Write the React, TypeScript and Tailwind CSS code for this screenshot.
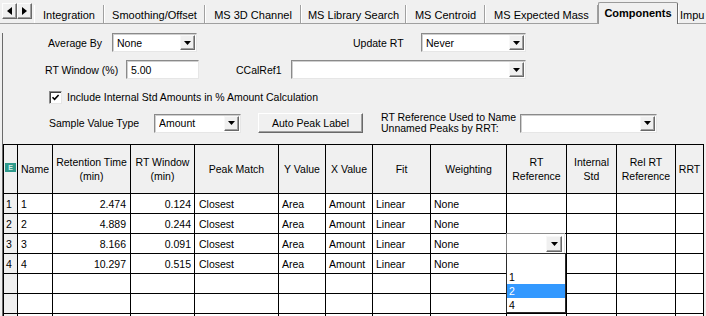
import React from "react";

function DownArrow() {
  return (
    <svg width="7" height="4" viewBox="0 0 7 4">
      <path d="M0 0h7L3.5 4z" fill="#000" />
    </svg>
  );
}

function DropBtn({ className = "" }: { className?: string }) {
  return (
    <div
      className={`flex items-center justify-center bg-[#f0f0f0] border border-t-[#f8f8f8] border-l-[#f8f8f8] border-r-[#696969] border-b-[#696969] shadow-[inset_-1px_-1px_0_#a0a0a0] ${className}`}
    >
      <DownArrow />
    </div>
  );
}

function Combo({ className = "", value = "" }: { className?: string; value?: string }) {
  return (
    <div
      className={`flex items-center bg-white border border-t-[#8a8a8a] border-l-[#8a8a8a] border-r-[#e6e6e6] border-b-[#e6e6e6] shadow-[inset_1px_1px_0_#cfcfcf] pl-[4px] pr-[1px] ${className}`}
    >
      <span className="flex-1 truncate">{value}</span>
      <DropBtn className="w-[15px] h-[15px]" />
    </div>
  );
}

function ArrowBtn({ dir }: { dir: "l" | "r" }) {
  return (
    <div className="w-[15px] h-[16px] flex items-center justify-center bg-[#f0f0f0] border border-t-[#fdfdfd] border-l-[#fdfdfd] border-r-[#696969] border-b-[#696969] shadow-[inset_-1px_-1px_0_#a0a0a0]">
      <svg width="5" height="8" viewBox="0 0 5 8">
        {dir === "l" ? <path d="M5 0v8L0 4z" fill="#000" /> : <path d="M0 0v8l5-4z" fill="#000" />}
      </svg>
    </div>
  );
}

const tabs: { label: string; w: string; sel?: boolean; left?: boolean }[] = [
  { label: "Integration", w: "w-[70px]" },
  { label: "Smoothing/Offset", w: "w-[101px]" },
  { label: "MS 3D Channel", w: "w-[96px]" },
  { label: "MS Library Search", w: "w-[105px]" },
  { label: "MS Centroid", w: "w-[79px]" },
  { label: "MS Expected Mass", w: "w-[113px]" },
  { label: "Components", w: "w-[80px]", sel: true },
  { label: "Impu", w: "w-[60px]", left: true },
];

const cols =
  "grid grid-cols-[14px_35px_78px_64px_84px_47px_47px_58px_76px_60px_50px_59px_28px]";

const headers: { t: React.ReactNode }[] = [
  { t: "Name" },
  { t: <>Retention Time<br />(min)</> },
  { t: <>RT Window<br />(min)</> },
  { t: "Peak Match" },
  { t: "Y Value" },
  { t: "X Value" },
  { t: "Fit" },
  { t: "Weighting" },
  { t: <>RT<br />Reference</> },
  { t: <>Internal<br />Std</> },
  { t: <>Rel RT<br />Reference</> },
  { t: "RRT" },
];

const rows = [
  ["1", "1", "2.474", "0.124", "Closest", "Area", "Amount", "Linear", "None"],
  ["2", "2", "4.889", "0.244", "Closest", "Area", "Amount", "Linear", "None"],
  ["3", "3", "8.166", "0.091", "Closest", "Area", "Amount", "Linear", "None"],
  ["4", "4", "10.297", "0.515", "Closest", "Area", "Amount", "Linear", "None"],
  ["", "", "", "", "", "", "", "", ""],
  ["", "", "", "", "", "", "", "", ""],
  ["", "", "", "", "", "", "", "", ""],
];

export default function App() {
  return (
    <div className="w-[706px] h-[316px] overflow-hidden bg-[#f0f0f0] text-black font-['Liberation_Sans',Arial,sans-serif] text-[10.5px] leading-[12px]">
      {/* Tab strip */}
      <div className="flex items-end h-[24px] border-b border-[#a0a0a0] text-[11px] whitespace-nowrap">
        <div className="self-start mt-[3px] ml-[2px] flex">
          <ArrowBtn dir="l" />
          <ArrowBtn dir="r" />
        </div>
        <div className="flex items-end ml-[2px]">
          {tabs.map((t) =>
            t.sel ? (
              <div
                key={t.label}
                className={`${t.w} h-[22px] -mb-px relative z-10 flex items-center justify-center bg-[#f0f0f0] border-t border-l border-[#9a9a9a] border-r border-r-[#6a6a6a] rounded-t-[2px] font-bold pb-[1px] shrink-0`}
              >
                {t.label}
              </div>
            ) : (
              <div
                key={t.label}
                className={`${t.w} h-[18px] flex items-center ${t.left ? "justify-start pl-[1px]" : "justify-center"} border-l border-l-white border-r border-r-[#a0a0a0] pt-[1px] overflow-hidden shrink-0`}
              >
                {t.label}
              </div>
            )
          )}
        </div>
      </div>

      {/* Body */}
      <div className="ml-[2px] border-l border-[#6a6a6a] h-[292px]">
        {/* Row 1 */}
        <div className="flex items-center mt-[9px] h-[19px] pl-[45px]">
          <div className="w-[64px]">Average By</div>
          <Combo className="w-[85px] h-[19px]" value="None" />
          <div className="ml-[156px] w-[68px]">Update RT</div>
          <Combo className="w-[105px] h-[19px]" value="Never" />
        </div>
        {/* Row 2 */}
        <div className="flex items-center mt-[8px] h-[19px] pl-[42px]">
          <div className="w-[81px]">RT Window (%)</div>
          <div className="w-[73px] h-[19px] flex items-center bg-white border border-t-[#8a8a8a] border-l-[#8a8a8a] border-r-[#e6e6e6] border-b-[#e6e6e6] shadow-[inset_1px_1px_0_#cfcfcf] pl-[4px]">
            5.00
          </div>
          <div className="ml-[37px] w-[55px]">CCalRef1</div>
          <Combo className="w-[235px] h-[19px]" value="" />
        </div>
        {/* Row 3 */}
        <div className="flex items-center mt-[11px] h-[14px] pl-[46px]">
          <div className="w-[13px] h-[13px] bg-white border border-t-[#8a8a8a] border-l-[#8a8a8a] border-r-[#e6e6e6] border-b-[#e6e6e6] shadow-[inset_1px_1px_0_#404040] flex items-center justify-center">
            <svg width="9" height="9" viewBox="0 0 9 9">
              <path d="M1.5 4.2 L3.6 6.4 L7.6 2" stroke="#000" strokeWidth="1.6" fill="none" />
            </svg>
          </div>
          <div className="ml-[5px]">Include Internal Std Amounts in % Amount Calculation</div>
        </div>
        {/* Row 4 */}
        <div className="flex items-center mt-[9px] h-[20px] pl-[46px]">
          <div className="w-[105px]">Sample Value Type</div>
          <Combo className="w-[87px] h-[19px]" value="Amount" />
          <div className="ml-[17px] w-[105px] h-[20px] flex items-center justify-center bg-[#f0f0f0] border border-t-white border-l-white border-r-[#696969] border-b-[#696969] shadow-[inset_-1px_-1px_0_#a0a0a0]">
            Auto Peak Label
          </div>
          <div className="ml-[18px] w-[139px] leading-[11px]">
            RT Reference Used to Name
            <br />
            Unnamed Peaks by RRT:
          </div>
          <Combo className="w-[137px] h-[19px]" value="" />
        </div>

        {/* Grid */}
        <div className={`${cols} mt-[11px] w-[701px] border-l border-t border-black`}>
          {/* header */}
          <div className="h-[49px] border-r border-b border-black bg-[#f0f0f0] flex items-center justify-center pb-[3px]">
            <div className="w-[11px] h-[9px] bg-[#2f9a8c] text-[#d8f0ea] text-[7px] leading-[9px] font-bold flex items-center justify-center">
              E
            </div>
          </div>
          {headers.map((h, i) => (
            <div
              key={i}
              className="h-[49px] border-r border-b border-black bg-[#f0f0f0] flex items-center justify-center text-center leading-[14px] whitespace-nowrap"
            >
              <div>{h.t}</div>
            </div>
          ))}
          {rows.map((r, ri) => (
            <React.Fragment key={ri}>
              <div className="h-[20px] border-r border-b border-black bg-[#f0f0f0] flex items-center pl-[2px]">
                {r[0]}
              </div>
              <div className="h-[20px] border-r border-b border-black bg-white flex items-center pl-[3px]">
                {r[1]}
              </div>
              <div className="h-[20px] border-r border-b border-black bg-white flex items-center justify-end pr-[4px]">
                {r[2]}
              </div>
              <div className="h-[20px] border-r border-b border-black bg-white flex items-center justify-end pr-[3px]">
                {r[3]}
              </div>
              <div className="h-[20px] border-r border-b border-black bg-white flex items-center pl-[4px]">
                {r[4]}
              </div>
              <div className="h-[20px] border-r border-b border-black bg-white flex items-center pl-[3px]">
                {r[5]}
              </div>
              <div className="h-[20px] border-r border-b border-black bg-white flex items-center pl-[3px]">
                {r[6]}
              </div>
              <div className="h-[20px] border-r border-b border-black bg-white flex items-center pl-[3px]">
                {r[7]}
              </div>
              <div className="h-[20px] border-r border-b border-black bg-white flex items-center pl-[3px]">
                {r[8]}
              </div>
              <div className="h-[20px] border-r border-b border-black bg-white relative">
                {ri === 2 && (
                  <>
                    <div className="absolute left-[-1px] top-[-1px] w-[59px] h-[21px] flex items-center bg-white border border-t-[#8a8a8a] border-l-[#8a8a8a] border-r-[#e6e6e6] border-b-[#e6e6e6] pr-[2px] justify-end z-10">
                      <DropBtn className="w-[16px] h-[16px]" />
                    </div>
                    <div className="absolute left-[-1px] top-[19px] w-[60px] h-[60px] bg-white border border-[#2a2a2a] z-20 pt-[2px]">
                      <div className="h-[14px]" />
                      <div className="h-[14px] flex items-center pl-[2px]">1</div>
                      <div className="h-[14px] flex items-center pl-[2px] bg-[#3399ff] text-white">2</div>
                      <div className="h-[14px] flex items-center pl-[2px]">4</div>
                    </div>
                  </>
                )}
              </div>
              <div className="h-[20px] border-r border-b border-black bg-white" />
              <div className="h-[20px] border-r border-b border-black bg-white" />
              <div className="h-[20px] border-r border-b border-black bg-white" />
            </React.Fragment>
          ))}
        </div>
      </div>
    </div>
  );
}
